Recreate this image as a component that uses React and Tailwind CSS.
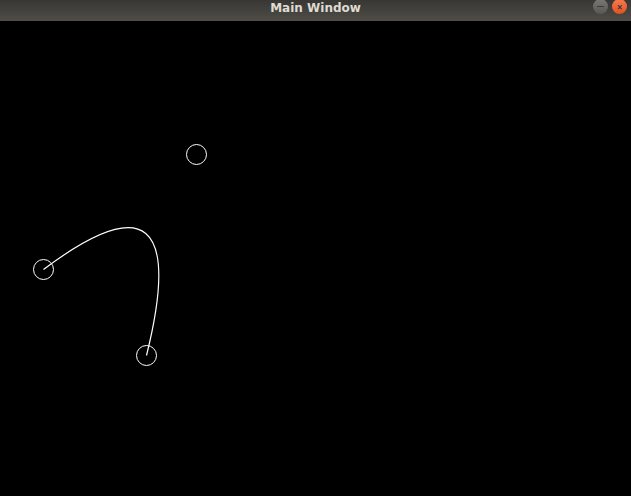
export default function App() {
  return (
    <div className="w-[631px] h-[496px] bg-black flex flex-col overflow-hidden">
      {/* TITLE BAR */}
      <div className="relative h-[21px] shrink-0 bg-gradient-to-b from-[#383733] to-[#4f4d48] flex items-start justify-center">
        <span
          className="text-[12px] leading-[16px] font-bold text-[#dfdbd2] pt-[0px]"
          style={{ fontFamily: '"DejaVu Sans", sans-serif' }}
        >
          Main Window
        </span>
        <div className="absolute right-[4px] top-[-1px] flex gap-[4px]">
          <div className="w-[15px] h-[15px] rounded-full bg-gradient-to-b from-[#7a7873] to-[#5a5854] flex items-center justify-center">
            <div className="w-[7px] h-[1px] bg-[#3c3b37]"></div>
          </div>
          <div className="w-[15px] h-[15px] rounded-full bg-gradient-to-b from-[#f57b4f] to-[#e2501f] flex items-center justify-center text-[10px] leading-none font-bold text-[#3c3b37]">
            ×
          </div>
        </div>
      </div>

      {/* CANVAS */}
      <svg className="block" width="631" height="475" viewBox="0 21 631 475">
        <path
          d="M43.5 269.5 Q196.5 154.5 146.5 355.5"
          fill="none"
          stroke="white"
          strokeWidth="1.2"
        />
        <circle cx="196.5" cy="154.5" r="10" fill="none" stroke="white" strokeWidth="1" />
        <circle cx="43.5" cy="269.5" r="10" fill="none" stroke="white" strokeWidth="1" />
        <circle cx="146.5" cy="355.5" r="10" fill="none" stroke="white" strokeWidth="1" />
      </svg>
    </div>
  );
}
